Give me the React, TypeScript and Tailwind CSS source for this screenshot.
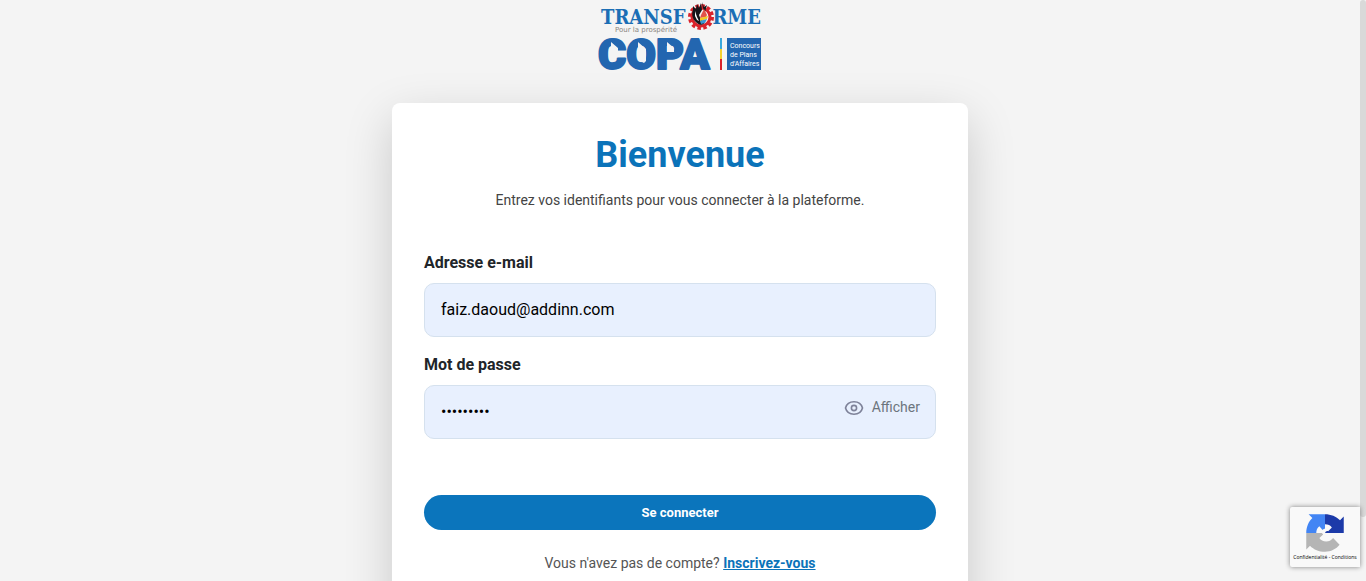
import { useState } from "react";

function Logo() {
  return (
    <svg width="164" height="74" viewBox="0 0 164 74" role="img" aria-label="Transforme COPA">
      <g fill="#1b6eb5" fontFamily="'DejaVu Serif Condensed', 'DejaVu Serif', serif" fontWeight="700" fontSize="20">
        <text x="3" y="24">TRANSF</text>
        <text x="163" y="24" textAnchor="end">RME</text>
      </g>
      <circle cx="103" cy="17" r="9" fill="#f4f4f4" stroke="#d9232b" strokeWidth="3" />
      <circle cx="103" cy="17" r="11.500" fill="none" stroke="#d9232b" strokeWidth="3" strokeDasharray="3.500 2.520" />
      <path d="M95 10C93 15 95 20 99 23C102 26 106 25 107 22L103 20L101 15L104 10L103 3L101 8L99 4L98 9L95 6Z" fill="#16151a" />
      <path d="M104 2L105 8L107 12L109 5L106 7Z" fill="#16151a" />
      <path d="M103 15L106 9L109 15L108 17L102 18Z" fill="#e2534a" />
      <path d="M102 18L110 16L109 19L102 21Z" fill="#f1c928" />
      <path d="M102 21L109 19L107 23L103 24Z" fill="#3b96d2" />
      <path d="M97 11L99 17L101 21L99 20L97 16Z" fill="#fff" />
      <text x="17" y="32" fill="#8b8580" fontFamily="'DejaVu Sans', sans-serif" fontSize="7">Pour la prospérité</text>
      <text
        x="0"
        y="69"
        fill="#2366b0"
        stroke="#2366b0"
        strokeWidth="2"
        strokeLinejoin="round"
        fontFamily="Roboto, sans-serif"
        fontWeight="900"
        fontSize="43"
      >
        COPA
      </text>
      <path d="M13 42L20 48V51H13ZM40 42L48 49V61L46 63L40 60ZM69 42L76 48V52H69Z" fill="#f4f4f4" />
      <path d="M123 38V49" stroke="#3aa8dc" strokeWidth="2" />
      <path d="M123 49V59" stroke="#f3d02f" strokeWidth="2" />
      <path d="M123 59V70" stroke="#d9232b" strokeWidth="2" />
      <rect x="129" y="38" width="34" height="32" fill="#2366b0" />
      <g fill="#fff" fontFamily="'Liberation Sans Narrow', Roboto, sans-serif" fontSize="7">
        <text x="132" y="48">Concours</text>
        <text x="132" y="57">de Plans</text>
        <text x="132" y="66">d'Affaires</text>
      </g>
    </svg>
  );
}

function EyeIcon() {
  return (
    <svg width="20" height="20" viewBox="0 0 20 20" fill="none" stroke="#7e8299" strokeWidth="1.6" aria-hidden="true">
      <path d="M1.500 11C2.500 7.200 5.700 4.800 10 4.800S17.500 7.200 18.500 11C17.500 14.800 14.300 17.200 10 17.200S2.500 14.800 1.500 11Z" />
      <circle cx="10" cy="11" r="2.600" />
    </svg>
  );
}

function RecaptchaBadge() {
  return (
    <aside className="absolute right-0 bottom-3.5 flex h-[60px] w-[70px] flex-col items-center overflow-hidden rounded-l-xs bg-[#f9f9f9] pt-1.5 shadow-[0_0_5px_gray]">
      <svg width="40" height="40" viewBox="0 0 64 64" className="shrink-0" aria-label="reCAPTCHA" role="img">
        <path d="M62 31.900V5.700l-6 6C50 5.500 41.500 2 32 2v16c5 0 8.500 1.800 11 5l-6 6c-2-1-4 0-5 3z" fill="#1c3aa9" />
        <path d="M32 2H5.800l6 6C5.500 14 2 22.500 2 32h16c0-5 1.800-8.500 5-11l5 6c1-1 2-2 4-2z" fill="#4285f4" />
        <path d="M2 32v26.200l6-6C14 58.500 22.500 62 32 62c9.500 0 17.800-4.400 23.300-11.200L45 40c-3 4-7 5.500-11 5.500-5 0-9-2-11-5.500l6-5.500-2-2.500z" fill="#b5b5b5" />
      </svg>
      <div className="whitespace-nowrap font-['Open_Sans',sans-serif] text-[5px] leading-2 text-black">
        <a href="#confidentialite">Confidentialité</a> - <a href="#conditions">Conditions</a>
      </div>
    </aside>
  );
}

const fieldClass =
  "block h-[54px] w-full rounded-[10px] border border-[#d5e1ee] bg-[#e8f0fe] px-4 pb-0.5 text-base text-black outline-none";

export default function App() {
  const [visible, setVisible] = useState(false);

  return (
    <div className="relative flex h-screen bg-[#f4f4f4] font-[Roboto,sans-serif]">
      <div className="relative flex min-w-0 flex-1">
        <main className="flex flex-1 flex-col items-center overflow-y-auto [scrollbar-width:none]">
          <header className="mb-[29px] shrink-0">
            <Logo />
          </header>
          <section className="w-full max-w-xl shrink-0 rounded-lg bg-white p-8 shadow-[0_16px_48px_rgba(0,0,0,0.175)]">
            <h1 className="text-center text-4xl leading-10 font-bold text-[#0b73b9]">Bienvenue</h1>
            <p className="mt-[15px] text-center text-sm leading-5 text-[#444]">
              Entrez vos identifiants pour vous connecter à la plateforme.
            </p>
            <form className="mt-[41px]" onSubmit={(event) => event.preventDefault()}>
              <label htmlFor="email" className="mb-2 block text-base leading-6 font-bold text-[#212529]">
                Adresse e-mail
              </label>
              <input id="email" type="email" defaultValue="faiz.daoud@addinn.com" className={fieldClass} />
              <label htmlFor="password" className="mt-4 mb-2 block text-base leading-6 font-bold text-[#212529]">
                Mot de passe
              </label>
              <div className="relative">
                <input
                  id="password"
                  type={visible ? "text" : "password"}
                  defaultValue="motpasse1"
                  className={fieldClass}
                />
                <button
                  type="button"
                  onClick={() => setVisible(!visible)}
                  className="absolute top-3 right-4 flex items-center gap-2 text-sm leading-5 text-[#6c757d]"
                >
                  <EyeIcon />
                  {visible ? "Masquer" : "Afficher"}
                </button>
              </div>
              <button
                type="submit"
                className="mt-14 block h-[35px] w-full rounded-full bg-[#0b75bc] text-[13px] font-bold text-white"
              >
                Se connecter
              </button>
            </form>
            <p className="mt-[23px] pb-10 text-center text-sm leading-5 text-[#555]">
              Vous n'avez pas de compte?{" "}
              <a href="#inscription" className="font-bold text-[#0b73b9] underline">
                Inscrivez-vous
              </a>
            </p>
          </section>
        </main>
        <RecaptchaBadge />
      </div>
      <div className="w-1.5 shrink-0 bg-[#f4f4f4]" aria-hidden="true">
        <div className="h-[89%] rounded-full bg-[#d9d9d9]" />
      </div>
    </div>
  );
}
